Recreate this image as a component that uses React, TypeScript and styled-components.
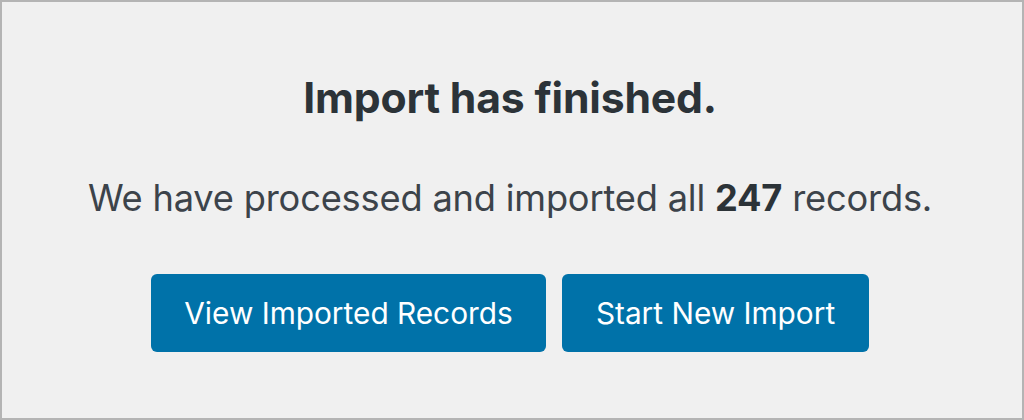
import React from "react";
import styled, { createGlobalStyle } from "styled-components";

const GlobalStyle = createGlobalStyle`
  html, body { margin: 0; padding: 0; }
  body { font-family: Inter, "Noto Sans", sans-serif; }
`;

const Frame = styled.div`
  box-sizing: border-box;
  width: 1024px;
  height: 420px;
  border: 2px solid #b4b4b4;
  background: #f0f0f0;
  display: flex;
  flex-direction: column;
  align-items: center;
  padding: 68px 4px 0 0;
`;

const Title = styled.h1`
  margin: 0;
  font-size: 42.7px;
  line-height: 56px;
  font-weight: 700;
  color: #2c3338;
  letter-spacing: -0.2px;
`;

const Message = styled.p`
  margin: 48px 0 0;
  font-size: 36.25px;
  line-height: 48px;
  font-weight: 400;
  color: #3c434a;
  letter-spacing: -0.2px;
  strong { font-weight: 700; color: #2c3338; }
`;

const Actions = styled.div`
  display: flex;
  gap: 16px;
  margin-top: 52px;
`;

const Button = styled.button<{ $w: number }>`
  box-sizing: border-box;
  width: ${(p) => p.$w}px;
  height: 78px;
  border: none;
  border-radius: 6px;
  background: #0072a9;
  color: #ffffff;
  font-family: Inter, "Noto Sans", sans-serif;
  font-size: 29.8px;
  font-weight: 400;
  display: flex;
  align-items: center;
  justify-content: center;
  cursor: pointer;
`;

export default function App() {
  return (
    <>
      <GlobalStyle />
      <Frame>
        <Title>Import has finished.</Title>
        <Message>
          We have processed and imported all <strong>247</strong> records.
        </Message>
        <Actions>
          <Button $w={395}>View Imported Records</Button>
          <Button $w={307}>Start New Import</Button>
        </Actions>
      </Frame>
    </>
  );
}
